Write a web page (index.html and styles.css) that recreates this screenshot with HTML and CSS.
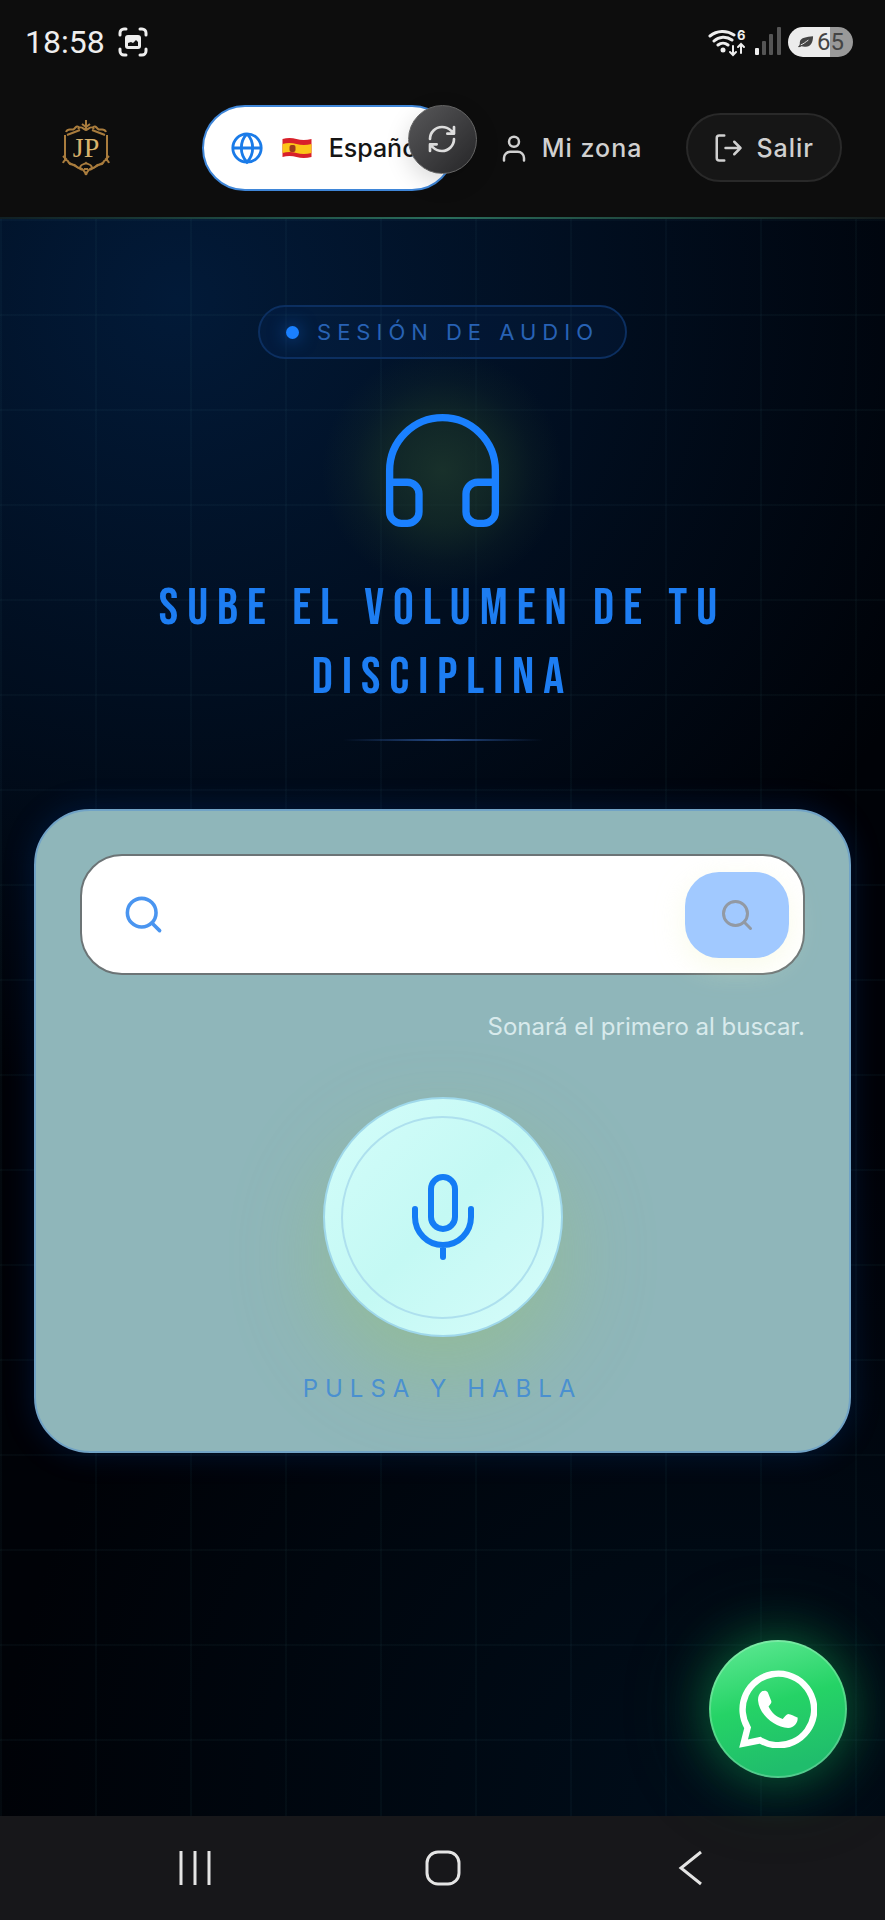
FILE: index.html
```html
<!DOCTYPE html>
<html lang="es">
<head>
  <meta charset="UTF-8" />
  <meta name="viewport" content="width=device-width, initial-scale=1.0"/>
  <title>Sesión de audio</title>
  <link rel="stylesheet" href="styles.css">
</head>
<body>

<!-- Status bar -->
<div class="status-bar">
  <div class="status-left">
    <span class="clock">18:58</span>
    <svg class="capture" viewBox="0 0 30 30" fill="none" stroke="#eee" stroke-width="3" stroke-linecap="round">
      <path d="M2 8V6a4 4 0 0 1 4-4h2M22 2h2a4 4 0 0 1 4 4v2M28 22v2a4 4 0 0 1-4 4h-2M8 28H6a4 4 0 0 1-4-4v-2"/>
      <rect x="7" y="8" width="16" height="14" rx="3" fill="#eee" stroke="none"/>
      <path d="M10 19v-3l3-1 2 1 3-3 2 2v4z" fill="#111" stroke="none"/>
    </svg>
  </div>
  <div class="status-right">
    <svg class="wifi" viewBox="0 0 40 30" fill="none" stroke="#eee" stroke-width="3" stroke-linecap="round">
      <path d="M2 9a20 20 0 0 1 24-1M6 14a14 14 0 0 1 18-1M10 18a8 8 0 0 1 10 0"/>
      <circle cx="15" cy="23" r="2.5" fill="#eee" stroke="none"/>
      <path d="M25 19v8M22 25l3 3 3-3M33 26v-9M30 20l3-3 3 3" stroke-width="2"/>
      <text x="29" y="13" class="wifi-six">6</text>
    </svg>
    <svg class="signal" viewBox="0 0 26 30">
      <rect x="0" y="21" width="4" height="7" rx="1" fill="#eee"/>
      <rect x="7" y="14" width="4" height="14" rx="1" fill="#555"/>
      <rect x="14" y="7" width="4" height="21" rx="1" fill="#555"/>
      <rect x="22" y="0" width="4" height="28" rx="1" fill="#555"/>
    </svg>
    <div class="battery">
      <svg class="leaf" viewBox="0 0 18 14" fill="#444"><path d="M1 12c2-1 2-3 2-5 1-5 7-5 14-6 0 7-3 12-9 11-2 0-3-1-4 0-1 0-2 1-3 0z"/><path d="M4 10c3-1 5-3 8-5" stroke="#eee" stroke-width="1" fill="none"/></svg>
      <span>65</span>
    </div>
  </div>
</div>

<header>
  <a class="logo" href="#" aria-label="JP">
    <svg viewBox="0 0 48 58" fill="none" stroke="#a97c3d" stroke-width="2">
      <path d="M3 16v25M45 16v25M5 16l13-5M43 16l-13-5M6 43l14 8M42 43l-14 8"/>
      <path d="M24 1v10M20 5l4 3 4-3M16 10c3-4 5 0 8 1 3-1 5-5 8-1M4 13c2-5 6-1 8-3s3-4 6-1M44 13c-2-5-6-1-8-3s-3-4-6-1"/>
      <path d="M1 44c2-5 5-3 6 0s5 0 7 3 4 1 6 3 3 2 4 6M47 44c-2-5-5-3-6 0s-5 0-7 3-4 1-6 3-3 2-4 6M18 48c2-4 4-2 6-4 2 2 4 0 6 4M22 50h4M1 37l4 4M47 37l-4 4"/>
      <text x="24" y="38" class="logo-text">JP</text>
    </svg>
  </a>
  <nav>
    <label class="lang" for="lang">
      <svg class="globe" viewBox="0 0 24 24" fill="none" stroke="#1a7be8" stroke-width="2"><circle cx="12" cy="12" r="10"/><path d="M12 2a14.5 14.5 0 0 0 0 20 14.5 14.5 0 0 0 0-20M2 12h20"/></svg>
      <svg class="flag" viewBox="0 0 29 20"><path d="M0 1q7-2 14 0t15 0v18q-8 2-15 0T0 19z" fill="#d8202a"/><path d="M0 6q7-2 14 0t15 0v9q-8 2-15 0T0 15z" fill="#fcc419"/><rect x="7" y="7" width="6" height="7" rx="2" fill="#9c3b1b"/></svg>
      <select id="lang" aria-label="Idioma">
        <option>Español</option>
        <option>English</option>
      </select>
    </label>
    <button class="refresh" aria-label="Actualizar">
      <svg viewBox="0 0 24 24" fill="none" stroke="#ddd" stroke-width="2" stroke-linecap="round" stroke-linejoin="round"><path d="M3 12a9 9 0 0 1 9-9 9.75 9.75 0 0 1 6.74 2.74L21 8M21 3v5h-5M21 12a9 9 0 0 1-9 9 9.75 9.75 0 0 1-6.74-2.74L3 16M8 16H3v5"/></svg>
    </button>
    <a class="zone" href="#">
      <svg class="nav-icon" viewBox="0 0 24 24" fill="none" stroke="currentColor" stroke-width="2" stroke-linecap="round"><circle cx="12" cy="7" r="4"/><path d="M20 22v-2a5 5 0 0 0-5-5H9a5 5 0 0 0-5 5v2"/></svg>
      Mi zona
    </a>
    <button class="logout">
      <svg class="nav-icon" viewBox="0 0 24 24" fill="none" stroke="currentColor" stroke-width="2" stroke-linecap="round" stroke-linejoin="round"><path d="M9 2H5a2 2 0 0 0-2 2v16a2 2 0 0 0 2 2h4M10 12h12M17 7l5 5-5 5"/></svg>
      Salir
    </button>
  </nav>
</header>

<main>
  <div class="badge"><span class="dot"></span>SESIÓN DE AUDIO</div>

  <div class="hero-icon">
    <svg viewBox="0 0 24 24" fill="none" stroke="#1a80ff" stroke-width="1.25" stroke-linecap="round" stroke-linejoin="round"><path d="M3 14h3a2 2 0 0 1 2 2v3a2 2 0 0 1-2 2H5a2 2 0 0 1-2-2v-7a9 9 0 0 1 18 0v7a2 2 0 0 1-2 2h-1a2 2 0 0 1-2-2v-3a2 2 0 0 1 2-2h3"/></svg>
  </div>

  <h1>SUBE EL VOLUMEN DE TU DISCIPLINA</h1>
  <div class="divider"></div>

  <section class="card">
    <form class="search" onsubmit="return false">
      <svg class="search-icon" viewBox="0 0 24 24" fill="none" stroke="#4a95f0" stroke-width="2" stroke-linecap="round"><circle cx="11" cy="11" r="8"/><path d="m21 21-4.3-4.3"/></svg>
      <input type="text" aria-label="Buscar">
      <button class="search-btn" aria-label="Buscar">
        <svg viewBox="0 0 24 24" fill="none" stroke="#9299a3" stroke-width="2" stroke-linecap="round"><circle cx="11" cy="11" r="8"/><path d="m21 21-4.3-4.3"/></svg>
      </button>
    </form>
    <p class="hint">Sonará el primero al buscar.</p>
    <button class="mic" aria-label="Pulsa y habla">
      <span class="mic-ring">
        <svg viewBox="0 0 24 24" fill="none" stroke="#147cf5" stroke-width="1.5" stroke-linecap="round" stroke-linejoin="round"><path d="M12 2a3 3 0 0 0-3 3v7a3 3 0 0 0 6 0V5a3 3 0 0 0-3-3ZM19 10v2a7 7 0 0 1-14 0v-2M12 19v3"/></svg>
      </span>
    </button>
    <p class="mic-label">PULSA Y HABLA</p>
  </section>

  <a class="whatsapp" href="#" aria-label="WhatsApp">
    <svg viewBox="240 212 230 231">
      <path d="M265 383A106 106 0 1 1 302 420L253 430Z" fill="none" stroke="#fff" stroke-width="19"/>
      <path d="M305 277C311 272 322 272 325 279L335 304C337 309 332 315 327 320 335 337 350 351 369 357 374 351 379 343 385 342 392 343 408 350 413 353 415 365 405 382 385 384 345 382 300 345 296 303 295 292 299 282 305 277Z" fill="#fff"/>
    </svg>
  </a>
</main>

<!-- Android navigation -->
<footer>
  <button aria-label="Recientes"><svg viewBox="0 0 36 36" fill="none" stroke="#e4e4e4" stroke-width="3"><path d="M4 1v34M18 1v34M32 1v34"/></svg></button>
  <button aria-label="Inicio"><svg viewBox="0 0 36 36" fill="none" stroke="#e4e4e4" stroke-width="3"><rect x="2" y="2" width="32" height="32" rx="11"/></svg></button>
  <button aria-label="Atrás"><svg viewBox="0 0 36 36" fill="none" stroke="#e4e4e4" stroke-width="3"><path d="M28 2L8 18l20 16"/></svg></button>
</footer>

</body>
</html>
```
FILE: styles.css
```css
* {
  box-sizing: border-box;
}

body {
  margin: 0;
  min-height: 100vh;
  display: flex;
  flex-direction: column;
  font-family: 'Inter', sans-serif;
  background: #000207;
  color: #d0d0d0;
}

button {
  font-family: inherit;
  border: none;
  padding: 0;
  cursor: pointer;
}

svg {
  display: block;
  flex: none;
}

/* Status bar */
.status-bar {
  display: flex;
  justify-content: space-between;
  align-items: center;
  height: 78px;
  padding: 6px 32px 0 25px;
  background: #0d0d0d;
}

.status-left,
.status-right {
  display: flex;
  align-items: center;
}

.status-left {
  gap: 13px;
}

.status-right {
  gap: 7px;
}

.clock {
  font-family: 'Roboto', sans-serif;
  font-size: 32px;
  color: #eee;
}

.capture {
  width: 30px;
  height: 30px;
}

.wifi {
  width: 40px;
  height: 30px;
}

.wifi-six {
  font: 700 13px 'Inter', sans-serif;
  fill: #eee;
  stroke: none;
}

.signal {
  width: 26px;
  height: 30px;
}

.battery {
  display: flex;
  align-items: center;
  justify-content: center;
  gap: 3px;
  width: 65px;
  height: 30px;
  border-radius: 15px;
  font-family: 'Roboto', sans-serif;
  font-size: 24px;
  color: #444;
  background: linear-gradient(to right, #ececec 65%, #999 65%);
}

.leaf {
  width: 17px;
  height: 14px;
}

/* Header */
header {
  display: flex;
  justify-content: space-between;
  align-items: center;
  height: 141px;
  padding: 0 43px 0 62px;
  background: #0d0d0d;
  border-bottom: 2px solid;
  border-image: linear-gradient(to right, #101f24, #2a6e5c 50%, #141a1b) 1;
}

.logo svg {
  width: 48px;
  height: 58px;
}

.logo-text {
  font: 28px 'Liberation Serif', serif;
  fill: #d9b26c;
  stroke: none;
  text-anchor: middle;
}

nav {
  position: relative;
  display: flex;
  align-items: center;
  gap: 44px;
  font-size: 25px;
  font-weight: 500;
}

.lang {
  display: flex;
  align-items: center;
  width: 253px;
  height: 86px;
  padding: 0 24px 0 26px;
  border: 2px solid #3f86d8;
  border-radius: 43px;
  background: #fff;
}

.globe {
  width: 34px;
  height: 34px;
  margin-right: 18px;
}

.flag {
  width: 30px;
  height: 20px;
  margin-right: 17px;
}

.lang select {
  width: 100px;
  padding: 0;
  border: none;
  appearance: none;
  background: transparent;
  font: inherit;
  color: #151515;
}

.refresh {
  position: absolute;
  top: 0;
  left: 206px;
  display: flex;
  align-items: center;
  justify-content: center;
  width: 69px;
  height: 69px;
  border: 1px solid #666;
  border-radius: 50%;
  background: linear-gradient(135deg, #58585a, #252527);
  box-shadow: 0 8px 24px rgba(0,0,0,0.15);
}

.refresh svg {
  width: 32px;
  height: 32px;
}

.zone,
.logout {
  display: flex;
  align-items: center;
  gap: 13px;
  color: #d0d0d0;
  text-decoration: none;
  letter-spacing: 1px;
}

.logout {
  height: 69px;
  padding: 0 26px 0 25px;
  border: 2px solid #292929;
  border-radius: 35px;
  background: #161616;
  font-size: 25px;
  font-weight: 500;
}

.nav-icon {
  width: 30px;
  height: 30px;
}

/* Main */
main {
  position: relative;
  flex: 1;
  display: flex;
  flex-direction: column;
  align-items: center;
  padding: 86px 34px 40px;
  background:
    linear-gradient(rgba(70,140,150,0.05) 2px, transparent 2px) 0 0 / 95px 95px,
    linear-gradient(to right, rgba(70,140,150,0.05) 2px, transparent 2px) 0 0 / 95px 95px,
    radial-gradient(ellipse 95% 50% at 20% 5%, #021a38, transparent),
    radial-gradient(ellipse 80% 45% at 80% 100%, #000d1a, transparent),
    #000207;
}

.badge {
  display: flex;
  align-items: center;
  gap: 18px;
  height: 54px;
  padding: 0 26px;
  border: 2px solid #0c2f60;
  border-radius: 27px;
  background: rgba(10,50,110,0.18);
  font-size: 22px;
  letter-spacing: 6px;
  color: #2862b4;
}

.dot {
  width: 13px;
  height: 13px;
  border-radius: 50%;
  background: #1a80ff;
  box-shadow: 0 0 18px rgba(26,128,255,0.6);
}

.hero-icon {
  position: relative;
  margin: 41px 0 33px;
}

.hero-icon::before {
  content: '';
  position: absolute;
  inset: -50px;
  background: radial-gradient(closest-side, rgba(30,56,44,0.8), rgba(28,54,40,0.55) 45%, rgba(26,50,40,0.2) 75%, transparent);
}

.hero-icon svg {
  position: relative;
  width: 141px;
  height: 141px;
}

h1 {
  max-width: 640px;
  margin: 0;
  font-family: 'Bebas Neue', sans-serif;
  font-size: 52px;
  font-weight: 400;
  line-height: 69px;
  letter-spacing: 9px;
  text-align: center;
  color: #1d7df2;
}

.divider {
  width: 200px;
  height: 2px;
  margin: 27px 0 68px;
  background: linear-gradient(to right, transparent, #254a86, transparent);
}

.card {
  display: flex;
  flex-direction: column;
  align-items: center;
  width: 100%;
  padding: 43px 44px 47px;
  border: 2px solid #71a3c6;
  border-radius: 56px;
  background: #8fb6ba;
  box-shadow: 0 0 30px rgba(0,60,150,0.3);
}

.search {
  display: flex;
  align-items: center;
  width: 100%;
  height: 121px;
  padding: 0 14px 0 40px;
  border: 2px solid #6c7476;
  border-radius: 42px;
  background: #fff;
}

.search-icon {
  width: 43px;
  height: 43px;
}

.search input {
  flex: 1;
  min-width: 0;
  height: 80px;
  margin: 0 16px;
  border: none;
  outline: none;
  background: transparent;
  font: 26px 'Inter', sans-serif;
}

.search-btn {
  display: flex;
  align-items: center;
  justify-content: center;
  width: 104px;
  height: 86px;
  border-radius: 34px;
  background: #a1c9ff;
  box-shadow: 0 8px 30px rgba(240,245,200,0.4);
}

.search-btn svg {
  width: 36px;
  height: 36px;
}

.hint,
.mic-label {
  margin: 0;
  font-size: 24px;
  line-height: 30px;
}

.hint {
  align-self: flex-end;
  margin: 37px 0 55px;
  color: #d8eaec;
}

.mic {
  display: flex;
  align-items: center;
  justify-content: center;
  width: 240px;
  height: 240px;
  border: 2px solid #9fd8ea;
  border-radius: 50%;
  background: linear-gradient(135deg, #d4fdfa, #c4f9f4 50%, #d6fcfa);
  box-shadow: 0 38px 90px rgba(150,195,110,0.45);
}

.mic-ring {
  display: flex;
  align-items: center;
  justify-content: center;
  width: 203px;
  height: 203px;
  border: 2px solid #aee0ee;
  border-radius: 50%;
}

.mic-ring svg {
  width: 96px;
  height: 96px;
}

.mic-label {
  margin-top: 37px;
  letter-spacing: 7px;
  color: #4a90d0;
}

/* WhatsApp floating button */
.whatsapp {
  position: absolute;
  right: 38px;
  bottom: 38px;
  display: flex;
  align-items: center;
  justify-content: center;
  width: 138px;
  height: 138px;
  border: 2px solid rgba(255,255,255,0.22);
  border-radius: 50%;
  background: linear-gradient(165deg, #62ea96, #25d366 45%, #20bd6c 85%);
  background-origin: border-box;
  box-shadow: 0 0 50px rgba(20,160,80,0.5), 0 0 90px rgba(20,160,80,0.25);
}

.whatsapp svg {
  width: 78px;
  height: 78px;
}

/* Android navigation */
footer {
  display: flex;
  justify-content: center;
  align-items: center;
  gap: 212px;
  height: 104px;
  background: #17171a;
}

footer button {
  background: none;
}

footer svg {
  width: 36px;
  height: 36px;
}
```
